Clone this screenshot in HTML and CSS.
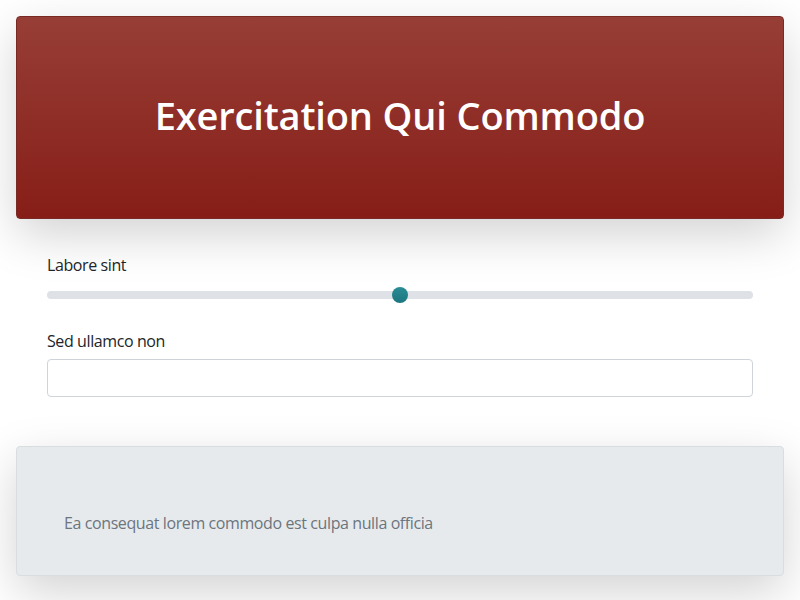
FILE: index.html
```html
<!DOCTYPE html>
<html lang="la">
<head>
<meta charset="utf-8">
<title>Exercitation Qui Commodo</title>
<link rel="stylesheet" href="styles.css">
</head>
<body>
<div class="page">
  <header class="hero">
    <h1 class="hero-title">Exercitation Qui Commodo</h1>
  </header>
  <section class="form">
    <div class="field">
      <label class="label" for="r1">Labore sint</label>
      <input class="range" id="r1" type="range" min="0" max="100" value="50">
    </div>
    <div class="field">
      <label class="label" for="t1">Sed ullamco non</label>
      <input class="text" id="t1" type="text">
    </div>
  </section>
  <footer class="note">
    <p class="note-text">Ea consequat lorem commodo est culpa nulla officia</p>
  </footer>
</div>
</body>
</html>
```
FILE: styles.css
```css
html, body { margin: 0; padding: 0; background: #fff; }
body {
  font-family: "Open Sans", "Noto Sans", sans-serif;
  font-size: 16px;
  line-height: 1.5;
  letter-spacing: -0.4px;
  color: #212529;
}
.page {
  padding: 16px 16px 24px;
  display: flex;
  flex-direction: column;
}
.hero {
  height: 201px;
  border: 1px solid #7a2a24;
  border-radius: 4px;
  background: linear-gradient(to bottom, #973e37, #861e17);
  box-shadow: 0 16px 48px rgba(0,0,0,.175);
  display: flex;
  align-items: center;
  justify-content: center;
}
.hero-title {
  margin: 0 0 3px;
  color: #fff;
  font-size: 38px;
  font-weight: 600;
  letter-spacing: -0.15px;
  line-height: 1.2;
}
.form {
  padding: 34px 31px 49px;
  display: flex;
  flex-direction: column;
  gap: 22px;
}
.field { display: flex; flex-direction: column; }
.label { margin-bottom: 6px; }
.range {
  -webkit-appearance: none;
  appearance: none;
  margin: 0;
  width: 100%;
  height: 24px;
  background: transparent;
}
.range::-webkit-slider-runnable-track {
  height: 8px;
  border-radius: 4px;
  background: #dee2e6;
}
.range::-webkit-slider-thumb {
  -webkit-appearance: none;
  width: 16px;
  height: 16px;
  margin-top: -4px;
  border-radius: 50%;
  border: 0;
  background: linear-gradient(to bottom, #2a8c95, #1c7680);
}
.text {
  margin: 0;
  height: 38px;
  box-sizing: border-box;
  border: 1px solid #ced4da;
  border-radius: 4px;
  padding: 6px 12px;
  font: inherit;
  background: #fff;
}
.note {
  height: 128px;
  border: 1px solid #dadde0;
  border-radius: 4px;
  background: #e7eaed;
  box-shadow: 0 16px 48px rgba(0,0,0,.175);
  box-sizing: content-box;
  padding: 0 47px;
}
.note-text {
  margin: 64px 0 0;
  color: #6c757d;
}
```
